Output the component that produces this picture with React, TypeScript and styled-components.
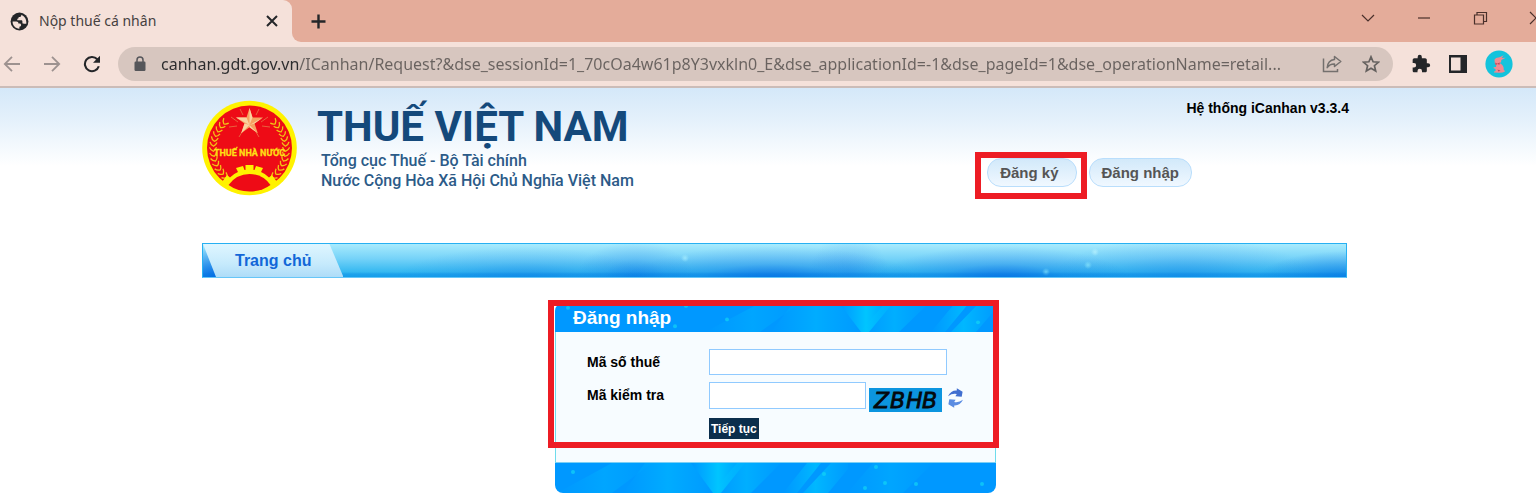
import React from 'react';
import styled, { createGlobalStyle } from 'styled-components';

const GlobalStyle = createGlobalStyle`
  *, *::before, *::after { box-sizing: border-box; }
  body {
    margin: 0;
    background: #fff;
    color: #000;
    font-family: "Liberation Sans", Arial, sans-serif;
    overflow-x: hidden;
  }
  button { font: inherit; border: 0; padding: 0; background: none; cursor: pointer; }
  svg { display: block; }
`;

/* ---------- Browser window ---------- */

const TabStrip = styled.div`
  display: flex;
  height: 42px;
  overflow: hidden;
  background: #e4ac9a;
`;

const BrowserTab = styled.div`
  display: flex;
  align-items: center;
  width: 292px;
  padding: 0 12px 0 10px;
  background: #f5e1da;
  border-radius: 0 9px 0 0;
`;

const TabTitle = styled.span`
  flex: 1;
  margin-left: 10px;
  color: #45403f;
  font: 14px/20px "Noto Sans", sans-serif;
`;

const StripRest = styled.div`
  display: flex;
  flex: 1;
  background: linear-gradient(#e4ac9a, #e4ac9a) 0 0 / 100% 30px no-repeat, #f5e1da;
`;

const StripShape = styled.div`
  display: flex;
  flex: 1;
  justify-content: space-between;
  align-items: center;
  padding-left: 18px;
  background: #e4ac9a;
  border-radius: 0 0 0 9px;
`;

const WindowControls = styled.div`
  display: flex;
  align-items: center;
  gap: 40px;
  margin: 0 -8px 6px 0;
`;

const Toolbar = styled.div`
  display: flex;
  align-items: center;
  height: 46px;
  padding: 0 23px 0 3px;
  background: #f5e1da;
  border-bottom: 2px solid #cbbcb8;
`;

const NavButtons = styled.div`
  display: flex;
  gap: 22px;
  margin-right: 17px;
`;

const AddressBar = styled.div`
  display: flex;
  flex: 1;
  align-items: center;
  min-width: 0;
  height: 34px;
  padding: 0 13px 0 16px;
  background: #d7c6bf;
  border-radius: 17px;
`;

/* The host name is drawn darker than the rest of the address. */
const Address = styled.input`
  flex: 1;
  min-width: 0;
  height: 26px;
  margin: 0 10px 0 15px;
  padding: 0;
  border: 0;
  outline: 0;
  color: transparent;
  background: linear-gradient(90deg, #2b2b2d 138px, #69625f 138px);
  background-clip: text;
  -webkit-background-clip: text;
  font: 16px/26px "Noto Sans", sans-serif;
`;

const AddressActions = styled.div`
  display: flex;
  gap: 20px;
`;

const Extensions = styled.div`
  display: flex;
  align-items: center;
  gap: 18px;
  margin-left: 18px;
`;

/* ---------- Site ---------- */

const Page = styled.div`
  min-height: 407px;
  padding: 12px 0 2px 15px;
  background: linear-gradient(#d4e8f9 0, #e3f0fb 30px, #fff 78px);
`;

const Content = styled.div`
  max-width: 1147px;
  margin: 0 auto;
`;

const Header = styled.header`
  display: flex;
  justify-content: space-between;
  min-height: 143px;
`;

const Brand = styled.a`
  display: flex;
  align-items: flex-start;
  gap: 20px;
  color: #14497b;
  font-family: Roboto, sans-serif;
  text-decoration: none;
`;

const BrandText = styled.div`
  padding-top: 3px;
`;

const BrandName = styled.div`
  font-size: 42px;
  font-weight: 700;
  line-height: 48px;
`;

const BrandLine = styled.div`
  padding-left: 4px;
  color: #2c5b88;
  font-size: 16px;
  font-weight: 500;
  line-height: 20px;
`;

const HeaderSide = styled.div`
  display: grid;
  grid-template-columns: auto 157px;
  grid-template-rows: 16px auto;
  row-gap: 36px;
  align-content: start;
`;

const Version = styled.div`
  grid-column: 2;
  justify-self: end;
  font-size: 14px;
  font-weight: 700;
  line-height: 16px;
  white-space: nowrap;
`;

const AccountActions = styled.div`
  display: flex;
  grid-column: 1;
  align-items: center;
  gap: 2px;
`;

const MarkedAction = styled.div`
  padding: 0 4px 6px 6px;
  margin-bottom: -6px;
  border: 6px solid #ed1c24;
`;

const AccountButton = styled.button<{ $wide?: boolean }>`
  height: 29px;
  padding: 0 ${p => (p.$wide ? 12 : 17)}px 0 12px;
  color: #555;
  font-size: 15px;
  font-weight: 700;
  background: linear-gradient(#d2e9fa, #f0f8ff);
  border: 1px solid #b9defc;
  border-radius: 14px;
`;

const MainNav = styled.nav`
  display: flex;
  height: 35px;
  margin-right: 2px;
  border: 1px solid #27b0f2;
  border-bottom-color: #66c6f8;
  background:
    linear-gradient(transparent 28px, rgba(0, 120, 225, 0.3) 30px),
    radial-gradient(circle 4px at 482px 14px, rgba(170, 240, 255, 0.7), transparent),
    radial-gradient(circle 4px at 892px 8px, rgba(190, 245, 255, 0.7), transparent),
    radial-gradient(circle 4px at 885px 21px, rgba(150, 240, 255, 0.6), transparent),
    radial-gradient(circle 4px at 843px 28px, rgba(150, 240, 255, 0.6), transparent),
    radial-gradient(ellipse 130px 34px at 320px 37px, rgba(20, 120, 230, 0.5), rgba(20, 120, 230, 0.15) 55%, transparent),
    radial-gradient(ellipse 60px 40px at 432px 37px, rgba(0, 90, 225, 0.5), rgba(0, 90, 225, 0.15) 55%, transparent),
    radial-gradient(ellipse 150px 36px at 568px 38px, rgba(0, 80, 225, 0.7), rgba(0, 80, 225, 0.2) 50%, transparent),
    radial-gradient(ellipse 40px 40px at 646px 30px, rgba(30, 120, 230, 0.25), transparent),
    radial-gradient(ellipse 130px 36px at 800px 38px, rgba(0, 80, 225, 0.7), rgba(0, 80, 225, 0.2) 50%, transparent),
    radial-gradient(ellipse 130px 40px at 980px 33px, rgba(20, 125, 230, 0.45), rgba(20, 125, 230, 0.15) 55%, transparent),
    radial-gradient(ellipse 90px 30px at 1143px 37px, rgba(0, 95, 225, 0.6), transparent),
    radial-gradient(ellipse 40px 34px at 12px 35px, rgba(0, 85, 225, 0.8), transparent),
    linear-gradient(#a9ebfd, #74d2f8 45%, #1caeee);
`;

const NavTab = styled.a`
  display: flex;
  align-items: center;
  height: 33px;
  padding: 0 32px;
  color: #1267d8;
  font-size: 16px;
  font-weight: 700;
  text-decoration: none;
  background: linear-gradient(#dff6ff, #c6eafc 60%, #aedcf8);
  clip-path: polygon(0 0, calc(100% - 14px) 0, 100% 100%, 13px 100%);
`;

const Panel = styled.section`
  position: relative;
  width: 441px;
  margin: 25px auto 0;
`;

const Highlight = styled.div`
  position: absolute;
  inset: -3px -3px 45px -7px;
  border: 6px solid #ed1c24;
  pointer-events: none;
`;

const Band = styled.div<{ $footer?: boolean }>`
  position: relative;
  height: ${p => (p.$footer ? 30 : 29)}px;
  overflow: hidden;
  background: #0098ff;
  border-radius: ${p => (p.$footer ? '0 0 8px 8px' : '8px 8px 0 0')};
`;

const BandArt = styled.svg`
  position: absolute;
  inset: 0;
  width: 100%;
  height: 100%;
`;

const PanelTitle = styled.h1`
  position: relative;
  margin: 0;
  padding-left: 18px;
  color: #fff;
  font-size: 19px;
  line-height: 29px;
`;

const LoginForm = styled.form`
  display: grid;
  grid-template-columns: 122px 1fr;
  row-gap: 6px;
  min-height: 131px;
  align-content: start;
  padding: 17px 0 0 31px;
  background: #f7fcff;
  border: 1px solid #6fdcec;
  border-top: 0;
  border-bottom-color: #7ccff5;
`;

const Label = styled.label`
  font-size: 14px;
  font-weight: 700;
  line-height: 27px;
`;

const Field = styled.div`
  display: flex;
  align-items: flex-start;
`;

const TextInput = styled.input<{ $short?: boolean }>`
  width: ${p => (p.$short ? 157 : 238)}px;
  height: ${p => (p.$short ? 27 : 26)}px;
  padding: 2px 6px;
  background: #fff;
  border: 1px solid #90caff;
  outline: 0;
`;

const Captcha = styled.svg`
  margin: 6px 5px 0 3px;
`;

const RefreshButton = styled.button`
  margin-top: 6px;
`;

const Submit = styled.button`
  grid-column: 2;
  justify-self: start;
  height: 21px;
  padding: 0 2px;
  color: #fff;
  font-size: 12px;
  font-weight: 700;
  background: #0b2e4c;
`;

/* ---------- Drawings ---------- */

const Globe = () => (
  <svg width="19" height="19" viewBox="0 0 19 19" aria-hidden="true">
    <circle cx="9.5" cy="9.5" r="8.9" fill="#242629" />
    <path d="M2.6 9.6h3.700c1.400 0 2.100.7 2.100 1.900h1.200c1 0 1.500.7 1.500 1.600 0 1-.6 1.700-1.700 1.700v1.900C5.600 16.700 2.400 13.600 2.600 9.600z" fill="#f5e1da" />
    <path d="M11.300 2.700c.2 1.600-.7 2.300-2.200 2.300-.4 0-.6.300-.6.800 0 .7-.4 1-1.200 1v1.400h3.900c.8 0 1.200.4 1.200 1.200v1.200c0 .8.500 1.200 1.400 1.200h2.500c.5-4-1.500-7.600-5-9.100z" fill="#f5e1da" />
  </svg>
);

const Close = () => (
  <svg width="16" height="16" viewBox="0 0 16 16" aria-hidden="true">
    <path d="M3 3l10 10M13 3L3 13" stroke="#242629" strokeWidth="2" />
  </svg>
);

const Plus = () => (
  <svg width="17" height="17" viewBox="0 0 17 17" aria-hidden="true">
    <path d="M8.500 1.500v14M1.500 8.500h14" stroke="#242629" strokeWidth="2.400" />
  </svg>
);

const Arrow = ({ forward }: { forward?: boolean }) => (
  <svg width="18" height="18" viewBox="0 0 18 18" aria-hidden="true">
    <path
      d={forward ? 'M1 9h15M9 1.800L16.200 9 9 16.200' : 'M17 9H2M9 1.800L1.800 9 9 16.200'}
      fill="none"
      stroke="#9d9290"
      strokeWidth="1.800"
    />
  </svg>
);

const Reload = () => (
  <svg width="18" height="18" viewBox="0 0 18 18" aria-hidden="true">
    <path d="M15.800 11.200A7.100 7.100 0 1 1 14.300 4.300" fill="none" stroke="#242629" strokeWidth="2.100" />
    <path d="M17 .8v7h-7z" fill="#242629" />
  </svg>
);

const Lock = () => (
  <svg width="12" height="16" viewBox="0 0 12 16" aria-hidden="true">
    <rect x=".5" y="5.500" width="11" height="9.500" rx="1.200" fill="#55565a" />
    <path d="M3 6V4a3 3 0 0 1 6 0v2" fill="none" stroke="#55565a" strokeWidth="1.500" />
  </svg>
);

const Share = () => (
  <svg width="20" height="18" viewBox="0 0 20 18" aria-hidden="true">
    <path d="M1.500 3.500v13h14V14" fill="none" stroke="#74706e" strokeWidth="1.500" />
    <path d="M12.500 1.500L18.800 6.500l-6.300 5V9C9 8.900 6.800 10.200 5.200 12.700c.3-4.600 2.800-7.800 7.300-8.300z" fill="none" stroke="#74706e" strokeWidth="1.500" strokeLinejoin="round" />
  </svg>
);

const Star = () => (
  <svg width="18" height="18" viewBox="0 0 18 18" aria-hidden="true">
    <path d="M9 1.800l2.100 5 5.400.4-4.100 3.500 1.300 5.300L9 13.200 4.300 16l1.300-5.300L1.500 7.200l5.400-.4z" fill="none" stroke="#65615f" strokeWidth="1.700" />
  </svg>
);

const Puzzle = () => (
  <svg width="20" height="20" viewBox="0 0 24 24" aria-hidden="true">
    <path d="M20.500 11H19V7c0-1.100-.9-2-2-2h-4V3.500a2.500 2.500 0 0 0-5 0V5H4a2 2 0 0 0-2 2v3.800h1.500a2.700 2.700 0 0 1 0 5.400H2V20c0 1.100.9 2 2 2h3.800v-1.500a2.700 2.700 0 0 1 5.400 0V22H17c1.100 0 2-.9 2-2v-4h1.500a2.500 2.500 0 0 0 0-5z" fill="#242629" />
  </svg>
);

const SidePanel = () => (
  <svg width="18" height="18" viewBox="0 0 18 18" aria-hidden="true">
    <path d="M0 0h18v18H0zM2 2.500v13h9.500v-13z" fill="#242629" fillRule="evenodd" />
  </svg>
);

const Avatar = () => (
  <svg width="28" height="28" viewBox="0 0 28 28" aria-hidden="true">
    <circle cx="14" cy="14" r="13.600" fill="#14c3dc" />
    <path d="M9.500 9.600Q11 7.200 14 7.600L18.800 5.200 16.500 8l4.200-.2-4.400 2.100q.3 2-1.300 3.300 4.200 2 3.700 6.500l1.500 1.600q-2.700 1.900-6.200 1.500l-5-.2q-.6-1.200 1.600-1.600l-.2-2-2.200-1.100q1-1.200 2.800-.8l.3-2.200q-1.800-.6-1.600-2.700z" fill="#f08a92" />
    <path d="M10.200 12.600l2 1.200 2.600-1.300-.4 2.300-2-.7-1.800.8zM12.500 19.500l3 1.200-2 .8z" fill="#b84358" />
  </svg>
);

const WindowIcon = ({ d }: { d: string }) => (
  <svg width="16" height="16" viewBox="0 0 16 16" aria-hidden="true">
    <path d={d} fill="none" stroke="#4a302b" strokeWidth="1.200" />
  </svg>
);

const leaves = Array.from({ length: 13 }, (_, i) => {
  const turn = 130 + i * 8;
  const a = (turn * Math.PI) / 180;
  return { x: 47.500 + 36 * Math.cos(a), y: 49 + 36 * Math.sin(a), turn };
});

const Wreath = () => (
  <g fill="none" stroke="#f2c414" strokeWidth="1.300">
    {leaves.map(l => (
      <path key={l.turn} transform={`translate(${l.x} ${l.y}) rotate(${l.turn})`} d="M-3 3Q-2 0 0-1Q3 0 4 3" />
    ))}
  </g>
);

const Emblem = () => (
  <svg width="95" height="96" viewBox="0 0 95 96" role="img" aria-label="Thuế Nhà nước">
    <circle cx="47.500" cy="48" r="47.300" fill="#fff200" />
    <circle cx="47.500" cy="48" r="42.500" fill="#ee0b16" />
    <Wreath />
    <g transform="matrix(-1 0 0 1 95 0)"><Wreath /></g>
    <path d="M29 17l7 5M66 17l-7 5M27 27l8-1M68 27l-8-1M37 37l3-5M57 37l-3-5M38 9l3 6M57 9l-3 6" stroke="#e9623e" strokeWidth="1" />
    <path d="M47.500 8l3 9.500h10.500l-8.500 6 3.300 9.700-8.300-6-8.300 6 3.300-9.700-8.500-6h10.500z" fill="#f6a260" />
    <path d="M47.500 8v17l3-7.500zM61 17.500l-13.500 7.500 5-1.500zM55.800 33.200l-8.300-8.200v2.200zM39.200 33.200l8.300-8.200-5-1.500zM34 17.500l13.500 7.500-3-7.500z" fill="#fbd2a0" />
    <path d="M20 82l5-7 3 2.500q4-4 8-5.500l-2-4 7-2 1.500 4h1V65h8v5h1l1.500-4 7 2-2 4q4 1.500 8 5.500l3-2.500 5 7-6 4q-8 7-21.500 7T26 86z" fill="#fff200" />
    <path d="M26.500 85q8-11 21-11 13 0 21 11-9 6.500-21 6.500T26.500 85z" fill="#ee0b16" />
    <text x="47.500" y="56" textAnchor="middle" fill="#ffdf14" stroke="#ffdf14" strokeWidth=".3" fontFamily="Roboto, sans-serif" fontWeight="700" fontSize="9">THUẾ NHÀ NƯỚC</text>
  </svg>
);

const Rays = ({ flip }: { flip?: boolean }) => (
  <BandArt viewBox="0 0 441 30" preserveAspectRatio="none" aria-hidden="true">
    <defs>
      <linearGradient id={flip ? 'rayFoot' : 'rayHead'}>
        <stop offset="0" stopColor="#00c8ff" stopOpacity="0" />
        <stop offset=".5" stopColor="#00d0ff" stopOpacity=".8" />
        <stop offset="1" stopColor="#00c8ff" stopOpacity=".1" />
      </linearGradient>
    </defs>
    <g transform={flip ? 'translate(-148 0)' : undefined} fill={`url(#${flip ? 'rayFoot' : 'rayHead'})`}>
      <path d="M150 30L205 0h40l-40 30z" opacity=".3" />
      <path d="M216 30L238 0h46l22 30z" opacity=".45" />
      <path d="M306 30L284 0h54l-24 30z" />
      <path d="M305 30L330 0h44l-30 30z" opacity=".5" />
      <path d="M376 30L400 0h14l-24 30zM396 30L424 0h17v6l-20 24z" opacity=".7" />
      <path d="M440 30L466 0h60l-30 30z" opacity=".3" />
    </g>
    <g fill="#12d4f5" opacity=".7">
      {(flip
        ? [[18, 9], [269, 11], [310, 25], [321, 4], [330, 20], [361, 21], [427, 21]]
        : [[13, 5], [131, 3], [120, 24], [172, 17], [423, 20]]
      ).map(([x, y]) => <circle key={x} cx={x} cy={y} r="2" />)}
    </g>
  </BandArt>
);

const Refresh = () => (
  <svg width="17" height="20" viewBox="0 0 17 20" aria-hidden="true">
    <path d="M1 8.200Q4 2.200 9.800 2.600V.2L15.600 3.800l-.9 5-6.300-.6 1.400-2.200Q5.500 5 1 8.200z" fill="#416fd0" />
    <path d="M16 11.800Q13 17.800 7.200 17.400v2.400L1.400 16.200l.9-5 6.300.6-1.400 2.200q4.300 1 8.800-2.200z" fill="#5a8ce2" />
  </svg>
);

export default function App() {
  return (
    <>
      <GlobalStyle />
      <TabStrip>
        <BrowserTab>
          <Globe />
          <TabTitle>Nộp thuế cá nhân</TabTitle>
          <button aria-label="Close tab"><Close /></button>
        </BrowserTab>
        <StripRest>
          <StripShape>
            <button aria-label="New tab"><Plus /></button>
            <WindowControls>
              <button aria-label="Search tabs"><WindowIcon d="M2 5l6 6 6-6" /></button>
              <button aria-label="Minimize"><WindowIcon d="M2 8h12" /></button>
              <button aria-label="Restore"><WindowIcon d="M2.500 5h9v9h-9zM5 5V2.500h9.500V11.500H12" /></button>
              <button aria-label="Close window"><WindowIcon d="M2 2l12 12M14 2L2 14" /></button>
            </WindowControls>
          </StripShape>
        </StripRest>
      </TabStrip>
      <Toolbar>
        <NavButtons>
          <button aria-label="Back"><Arrow /></button>
          <button aria-label="Forward"><Arrow forward /></button>
          <button aria-label="Reload"><Reload /></button>
        </NavButtons>
        <AddressBar>
          <Lock />
          <Address
            aria-label="Address"
            readOnly
            value="canhan.gdt.gov.vn/ICanhan/Request?&dse_sessionId=1_70cOa4w61p8Y3vxkln0_E&dse_applicationId=-1&dse_pageId=1&dse_operationName=retail..."
          />
          <AddressActions>
            <button aria-label="Share"><Share /></button>
            <button aria-label="Bookmark"><Star /></button>
          </AddressActions>
        </AddressBar>
        <Extensions>
          <button aria-label="Extensions"><Puzzle /></button>
          <button aria-label="Side panel"><SidePanel /></button>
          <button aria-label="Profile"><Avatar /></button>
        </Extensions>
      </Toolbar>

      <Page>
        <Content>
          <Header>
            <Brand href="#">
              <Emblem />
              <BrandText>
                <BrandName>THUẾ VIỆT NAM</BrandName>
                <BrandLine>Tổng cục Thuế - Bộ Tài chính</BrandLine>
                <BrandLine>Nước Cộng Hòa Xã Hội Chủ Nghĩa Việt Nam</BrandLine>
              </BrandText>
            </Brand>
            <HeaderSide>
              <Version>Hệ thống iCanhan v3.3.4</Version>
              <AccountActions>
                <MarkedAction><AccountButton>Đăng ký</AccountButton></MarkedAction>
                <AccountButton $wide>Đăng nhập</AccountButton>
              </AccountActions>
            </HeaderSide>
          </Header>
          <MainNav>
            <NavTab href="#">Trang chủ</NavTab>
          </MainNav>
          <Panel>
            <Band>
              <Rays />
              <PanelTitle>Đăng nhập</PanelTitle>
            </Band>
            <LoginForm>
              <Label htmlFor="tax">Mã số thuế</Label>
              <Field><TextInput id="tax" /></Field>
              <Label htmlFor="code">Mã kiểm tra</Label>
              <Field>
                <TextInput id="code" $short />
                <Captcha width="73" height="24" viewBox="0 0 73 24" role="img" aria-label="ZBHB">
                  <rect width="73" height="24" fill="#0c95df" />
                  <text x="5 21 37 53" y="20" fill="#04080c" stroke="#04080c" strokeWidth=".8" fontFamily="'DejaVu Sans', sans-serif" fontStyle="italic" fontSize="22">ZBHB</text>
                </Captcha>
                <RefreshButton type="button" aria-label="Refresh code"><Refresh /></RefreshButton>
              </Field>
              <Submit type="button">Tiếp tục</Submit>
            </LoginForm>
            <Band $footer><Rays flip /></Band>
            <Highlight />
          </Panel>
        </Content>
      </Page>
    </>
  );
}
